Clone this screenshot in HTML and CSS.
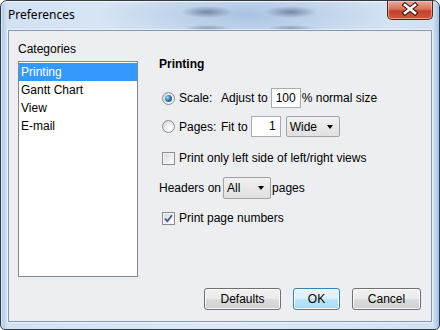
FILE: index.html
```html
<!DOCTYPE html>
<html lang="en">
<head>
    <meta charset="UTF-8">
    <title>Preferences</title>
    <link rel="stylesheet" href="styles.css">
</head>
<body>
    <div class="window">
        <div class="titlebar">
            <span class="title">Preferences</span>
            <div class="close">
                <svg width="46" height="19" viewBox="0 0 46 19">
                    <path d="M18 5 L28 13 M28 5 L18 13" stroke="#3a1a12" stroke-width="4.8" stroke-linecap="square"/>
                    <path d="M18 5 L28 13 M28 5 L18 13" stroke="#ffffff" stroke-width="2.6" stroke-linecap="square"/>
                </svg>
            </div>
        </div>

        <div class="client">
            <div class="main">
                <!-- Categories -->
                <div class="side">
                    <div class="side-label">Categories</div>
                    <ul class="list">
                        <li class="selected">Printing</li>
                        <li>Gantt Chart</li>
                        <li>View</li>
                        <li>E-mail</li>
                    </ul>
                </div>

                <!-- Printing options -->
                <div class="panel">
                    <div class="heading">Printing</div>

                    <div class="row row-scale indent">
                        <span class="radio checked"></span>
                        <span class="opt">Scale:</span>
                        <span class="pre">Adjust to</span>
                        <span class="field">100</span>
                        <span class="post">% normal size</span>
                    </div>

                    <div class="row row-pages indent">
                        <span class="radio"></span>
                        <span class="opt">Pages:</span>
                        <span class="pre">Fit to</span>
                        <span class="field">1</span>
                        <span class="combo combo-wide"><span>Wide</span><i class="arrow"></i></span>
                    </div>

                    <div class="row row-left indent">
                        <span class="check"></span>
                        <span class="opt-text">Print only left side of left/right views</span>
                    </div>

                    <div class="row row-headers">
                        <span>Headers on</span>
                        <span class="combo combo-all"><span>All</span><i class="arrow"></i></span>
                        <span class="post">pages</span>
                    </div>

                    <div class="row row-numbers indent">
                        <span class="check checked">
                            <svg width="11" height="11" viewBox="0 0 11 11">
                                <path d="M2 5.6 L4.4 8.2 L9 2.2" fill="none" stroke="#3d4f8e" stroke-width="1.7"/>
                            </svg>
                        </span>
                        <span class="opt-text">Print page numbers</span>
                    </div>
                </div>
            </div>

            <div class="buttons">
                <div class="btn btn-defaults">Defaults</div>
                <div class="btn btn-ok">OK</div>
                <div class="btn btn-cancel">Cancel</div>
            </div>
        </div>
    </div>
</body>
</html>
```

FILE: styles.css
```css
body {
    margin: 0;
    font-family: "Liberation Sans", Arial, sans-serif;
    font-size: 12px;
    color: #000;
}

.window {
    box-sizing: border-box;
    width: 440px;
    height: 330px;
    display: flex;
    flex-direction: column;
    padding: 0 7px 7px 7px;
    border: 1px solid #2f3a47;
    border-radius: 7px 7px 5px 5px;
    background:
        radial-gradient(ellipse 26px 6px at 206px 11px, rgba(60, 80, 110, 0.55), transparent),
        radial-gradient(ellipse 26px 6px at 290px 11px, rgba(60, 80, 110, 0.55), transparent),
        radial-gradient(ellipse 24px 3px at 206px 27px, rgba(60, 80, 110, 0.4), transparent),
        radial-gradient(ellipse 24px 3px at 290px 27px, rgba(60, 80, 110, 0.4), transparent),
        radial-gradient(ellipse 150px 32px at 245px 14px, rgba(110, 150, 205, 0.45), transparent),
        linear-gradient(to right, #a9c6e8 0, #d3e2f3 6px, #dce8f5 50%, #d3e2f3 calc(100% - 6px), #9fc0e6 100%);
    box-shadow: inset 0 1px 0 rgba(255, 255, 255, 0.8), inset 1px 0 0 rgba(255, 255, 255, 0.6);
}

.titlebar {
    height: 29px;
    display: flex;
    justify-content: space-between;
    align-items: flex-start;
}

.title {
    font-family: "Noto Sans", "Open Sans", sans-serif;
    font-size: 12px;
    line-height: 16px;
    padding-top: 6px;
    color: #000;
}

.close {
    width: 46px;
    height: 19px;
    margin-right: -1px;
    box-sizing: border-box;
    border: 1px solid #5a2417;
    border-top: none;
    border-radius: 0 0 5px 5px;
    background: linear-gradient(#e9a99a 0, #d8735c 45%, #c2412a 55%, #d05a3e 100%);
    box-shadow: inset 0 0 0 1px rgba(255, 220, 210, 0.5);
}

.close svg {
    display: block;
    margin: -1px 0 0 -1px;
}

.client {
    flex: 1;
    display: flex;
    flex-direction: column;
    padding: 11px 10px 11px 9px;
    background: #eceef2;
    border: 1px solid #8798ae;
    box-shadow: 0 0 0 1px rgba(255, 255, 255, 0.5);
}

.main {
    flex: 1;
    display: flex;
    gap: 21px;
}

.side {
    width: 120px;
    display: flex;
    flex-direction: column;
}

.side-label {
    line-height: 14px;
    margin-bottom: 5px;
}

.list {
    list-style: none;
    margin: 0;
    height: 216px;
    box-sizing: border-box;
    padding: 1px 0 0 0;
    border: 1px solid #828790;
    background: #fff;
}

.list li {
    height: 18px;
    line-height: 18px;
    padding-left: 2px;
}

.list li.selected {
    background: #3399ff;
    color: #fff;
}

.panel {
    flex: 1;
    padding-top: 15px;
    display: flex;
    flex-direction: column;
}

.heading {
    font-weight: bold;
    line-height: 14px;
}

.row {
    display: flex;
    align-items: center;
    line-height: 14px;
}

.indent {
    padding-left: 3px;
}

.row-scale {
    height: 20px;
    margin-top: 17px;
}

.row-pages {
    height: 21px;
    margin-top: 8px;
}

.row-left {
    height: 14px;
    margin-top: 14px;
}

.row-headers {
    height: 22px;
    margin-top: 12px;
}

.row-numbers {
    height: 14px;
    margin-top: 12px;
}

.opt {
    width: 42px;
    margin-left: 4px;
}

.opt-text {
    margin-left: 4px;
}

.pre {
    margin-right: 3px;
}

.post {
    margin-left: 1px;
}

.radio {
    width: 13px;
    height: 13px;
    box-sizing: border-box;
    border: 1px solid #8b8c8f;
    border-radius: 50%;
    background: radial-gradient(circle at 65% 65%, #ffffff 0, #e6e6e6 60%, #cfcfcf 100%);
    display: flex;
    align-items: center;
    justify-content: center;
}

.radio.checked::after {
    content: "";
    width: 7px;
    height: 7px;
    border-radius: 50%;
    background: radial-gradient(circle at 35% 35%, #a8dcf8 0, #2f7cb8 45%, #0f3763 100%);
}

.check {
    width: 13px;
    height: 13px;
    box-sizing: border-box;
    border: 1px solid #8b8c8f;
    background: linear-gradient(135deg, #d4d4d4 0, #f4f4f4 70%, #ffffff 100%);
    box-shadow: inset 0 0 0 1px #f6f6f6;
    display: flex;
    align-items: center;
    justify-content: center;
}

.check svg {
    display: block;
}

.field {
    width: 30px;
    height: 20px;
    box-sizing: border-box;
    border: 1px solid #a9abb0;
    background: #fff;
    text-align: right;
    padding-right: 4px;
    line-height: 18px;
}

.row-pages .field {
    height: 21px;
    line-height: 19px;
}

.combo {
    height: 21px;
    box-sizing: border-box;
    border: 1px solid #a3a3a3;
    border-radius: 2px;
    background: linear-gradient(#f1f1f1, #e0e0e0);
    display: flex;
    align-items: center;
    justify-content: space-between;
    padding-left: 3px;
}

.combo-wide {
    width: 54px;
    margin-left: 5px;
}

.combo-all {
    width: 48px;
    height: 22px;
    margin-left: 2px;
}

.arrow {
    width: 0;
    height: 0;
    border-top: 4px solid #000;
    border-left: 3.5px solid transparent;
    border-right: 3.5px solid transparent;
    margin-right: 6px;
}

.buttons {
    display: flex;
    justify-content: flex-end;
    gap: 12px;
}

.btn {
    height: 22px;
    box-sizing: border-box;
    border: 1px solid #707070;
    border-radius: 3px;
    background: linear-gradient(#f2f2f2 0, #ebebeb 50%, #dddddd 50%, #cfcfcf 100%);
    box-shadow: inset 0 0 0 1px #fbfbfb;
    text-align: center;
    line-height: 20px;
}

.btn-defaults {
    width: 77px;
}

.btn-ok {
    width: 47px;
    border-color: #3c7fb1;
    background: linear-gradient(#eaf6fd 0, #d9f0fc 50%, #bee6fd 50%, #a7d9f5 100%);
}

.btn-cancel {
    width: 69px;
}
```
